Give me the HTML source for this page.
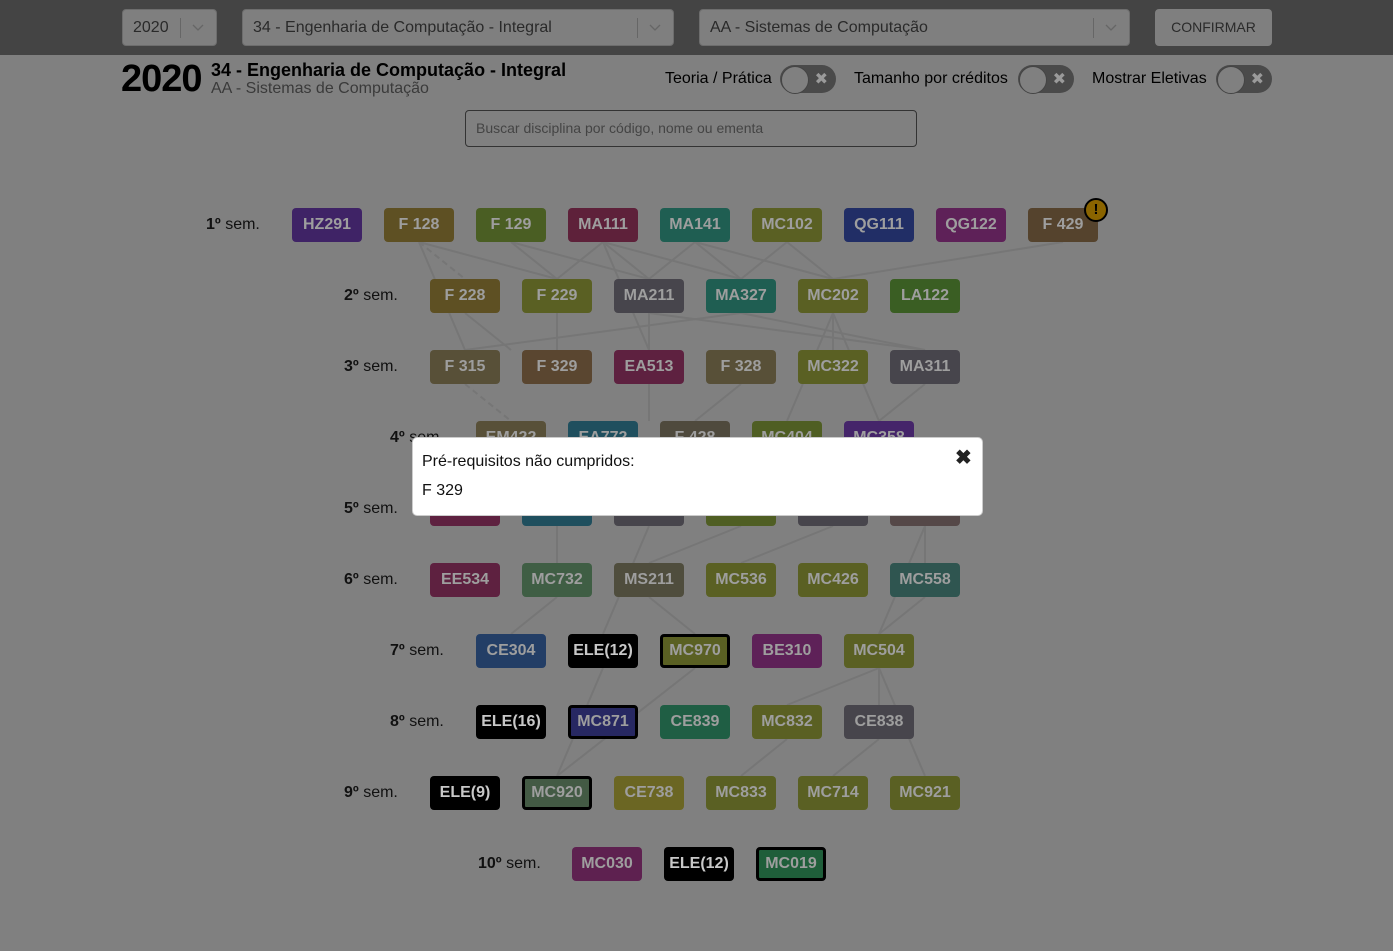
<!DOCTYPE html>
<html><head><meta charset="utf-8"><style>
*{box-sizing:border-box;margin:0;padding:0}
body{width:1393px;height:951px;background:#808080;font-family:"Liberation Sans",sans-serif;position:relative;overflow:hidden;color:#000}
.top{position:absolute;left:0;top:0;width:1393px;height:55px;background:#444}
.sel{position:absolute;top:9px;height:37px;background:#7f7f7f;border:1px solid #6d6d6d;border-radius:4px;font-size:16px;color:#2a2a2a;line-height:35px;padding-left:10px}
.sel .sep{position:absolute;top:8px;width:1px;height:20px;background:#666}
.sel svg{position:absolute;top:14px}
.btn{position:absolute;left:1155px;top:9px;width:117px;height:37px;background:#7f7f7f;border-radius:4px;font-size:14px;color:#2a2a2a;text-align:center;line-height:37px}
.abs{position:absolute;white-space:nowrap}
.tg{position:absolute;top:65px;width:56px;height:28px;border-radius:14px;background:#4a4a4a}
.tg:before{content:"";position:absolute;left:1px;top:1px;width:26px;height:26px;border-radius:50%;background:#808080;border:1px solid #444}
.tg:after{content:"✖";position:absolute;right:8px;top:4px;color:#9a9a9a;font-size:16px}
.b{position:absolute;width:70px;height:34px;border-radius:4px;color:#9e9e9e;font-weight:bold;font-size:16px;text-align:center;line-height:34px}
.k{border:3px solid #000;line-height:28px}
.s{position:absolute;font-size:16px;color:#111}
.s b{font-weight:bold}
</style></head><body>
<div class="top"></div>
<div class="sel" style="left:122px;width:95px">2020<span class="sep" style="left:57px"></span><svg style="left:69px" width="12" height="8"><path d="M1 1l5 5 5-5" stroke="#666" fill="none" stroke-width="1.3"/></svg></div>
<div class="sel" style="left:242px;width:432px">34 - Engenharia de Computação - Integral<span class="sep" style="left:394px"></span><svg style="left:406px" width="12" height="8"><path d="M1 1l5 5 5-5" stroke="#666" fill="none" stroke-width="1.3"/></svg></div>
<div class="sel" style="left:699px;width:431px">AA - Sistemas de Computação<span class="sep" style="left:393px"></span><svg style="left:405px" width="12" height="8"><path d="M1 1l5 5 5-5" stroke="#666" fill="none" stroke-width="1.3"/></svg></div>
<div class="btn">CONFIRMAR</div>

<div class="abs" style="left:121px;top:58px;font-size:38px;font-weight:bold;letter-spacing:-1px">2020</div>
<div class="abs" style="left:211px;top:60px;font-size:18px;font-weight:bold">34 - Engenharia de Computação - Integral</div>
<div class="abs" style="left:211px;top:80px;font-size:16px;color:#3a3a3a">AA - Sistemas de Computação</div>
<div class="abs" style="left:665px;top:70px;font-size:16px">Teoria / Prática</div>
<div class="tg" style="left:780px"></div>
<div class="abs" style="left:854px;top:70px;font-size:16px">Tamanho por créditos</div>
<div class="tg" style="left:1018px"></div>
<div class="abs" style="left:1092px;top:70px;font-size:16px">Mostrar Eletivas</div>
<div class="tg" style="left:1216px"></div>
<div class="abs" style="left:465px;top:110px;width:452px;height:37px;border:1px solid #333;border-radius:4px;font-size:14px;color:#444;line-height:35px;padding-left:10px">Buscar disciplina por código, nome ou ementa</div>

<svg class="abs" style="left:0;top:0" width="1393" height="951">
<g stroke="#767676" stroke-width="2" fill="none">
<line x1="419" y1="242" x2="465" y2="279" stroke-dasharray="6,4"/><line x1="419" y1="242" x2="557" y2="279"/><line x1="419" y1="242" x2="465" y2="350"/>
<line x1="511" y1="242" x2="557" y2="279"/><line x1="511" y1="242" x2="649" y2="279"/>
<line x1="603" y1="242" x2="557" y2="279"/><line x1="603" y1="242" x2="649" y2="279"/><line x1="603" y1="242" x2="741" y2="279"/><line x1="603" y1="242" x2="649" y2="350"/>
<line x1="695" y1="242" x2="649" y2="279"/><line x1="695" y1="242" x2="741" y2="279"/><line x1="695" y1="242" x2="833" y2="279"/>
<line x1="787" y1="242" x2="741" y2="279"/><line x1="787" y1="242" x2="833" y2="279"/>
<line x1="1063" y1="242" x2="833" y2="279"/>
<line x1="465" y1="313" x2="511" y2="350"/><line x1="557" y1="313" x2="557" y2="350"/><line x1="649" y1="313" x2="649" y2="421"/>
<line x1="465" y1="350" x2="741" y2="313"/><line x1="649" y1="313" x2="925" y2="350"/><line x1="741" y1="313" x2="925" y2="350"/>
<line x1="833" y1="313" x2="833" y2="350"/><line x1="833" y1="313" x2="787" y2="421"/><line x1="833" y1="313" x2="879" y2="421"/>
<line x1="465" y1="384" x2="511" y2="421" stroke-dasharray="6,4"/><line x1="649" y1="384" x2="649" y2="421"/><line x1="741" y1="384" x2="695" y2="421"/>
<line x1="925" y1="384" x2="879" y2="421"/>
<line x1="557" y1="526" x2="557" y2="563"/><line x1="649" y1="526" x2="603" y2="634"/><line x1="741" y1="526" x2="649" y2="563"/>
<line x1="833" y1="526" x2="741" y2="563"/><line x1="925" y1="526" x2="879" y2="634"/><line x1="925" y1="526" x2="925" y2="563"/>
<line x1="557" y1="597" x2="511" y2="634"/><line x1="649" y1="597" x2="695" y2="634"/><line x1="925" y1="597" x2="879" y2="634"/>
<line x1="603" y1="668" x2="557" y2="776"/><line x1="695" y1="668" x2="557" y2="776"/>
<line x1="879" y1="668" x2="787" y2="705"/><line x1="879" y1="668" x2="879" y2="705"/><line x1="879" y1="668" x2="925" y2="776"/>
<line x1="787" y1="739" x2="741" y2="776"/><line x1="879" y1="739" x2="833" y2="776"/>
</g></svg>

<div class="s" style="left:206px;top:216px"><b>1º</b> sem.</div>
<div class="s" style="left:344px;top:287px"><b>2º</b> sem.</div>
<div class="s" style="left:344px;top:358px"><b>3º</b> sem.</div>
<div class="s" style="left:390px;top:429px"><b>4º</b> sem.</div>
<div class="s" style="left:344px;top:500px"><b>5º</b> sem.</div>
<div class="s" style="left:344px;top:571px"><b>6º</b> sem.</div>
<div class="s" style="left:390px;top:642px"><b>7º</b> sem.</div>
<div class="s" style="left:390px;top:713px"><b>8º</b> sem.</div>
<div class="s" style="left:344px;top:784px"><b>9º</b> sem.</div>
<div class="s" style="left:478px;top:855px"><b>10º</b> sem.</div>

<div class="b" style="left:292px;top:208px;background:#3f2366">HZ291</div>
<div class="b" style="left:384px;top:208px;background:#5e5023">F 128</div>
<div class="b" style="left:476px;top:208px;background:#4a5e23">F 129</div>
<div class="b" style="left:568px;top:208px;background:#5e213a">MA111</div>
<div class="b" style="left:660px;top:208px;background:#1f5e52">MA141</div>
<div class="b" style="left:752px;top:208px;background:#5a6023">MC102</div>
<div class="b" style="left:844px;top:208px;background:#212e66">QG111</div>
<div class="b" style="left:936px;top:208px;background:#5e2158">QG122</div>
<div class="b" style="left:1028px;top:208px;background:#55432d">F 429</div>
<div class="abs" style="left:1084px;top:198px;width:24px;height:24px;border-radius:50%;background:#8a6400;border:2px solid #000;text-align:center;font-weight:bold;font-size:15px;line-height:20px;color:#000">!</div>

<div class="b" style="left:430px;top:279px;background:#5e5023">F 228</div>
<div class="b" style="left:522px;top:279px;background:#5a6023">F 229</div>
<div class="b" style="left:614px;top:279px;background:#47454c">MA211</div>
<div class="b" style="left:706px;top:279px;background:#1f5e52">MA327</div>
<div class="b" style="left:798px;top:279px;background:#5a6023">MC202</div>
<div class="b" style="left:890px;top:279px;background:#3a5e23">LA122</div>

<div class="b" style="left:430px;top:350px;background:#585038">F 315</div>
<div class="b" style="left:522px;top:350px;background:#5a4630">F 329</div>
<div class="b" style="left:614px;top:350px;background:#5e2140">EA513</div>
<div class="b" style="left:706px;top:350px;background:#585038">F 328</div>
<div class="b" style="left:798px;top:350px;background:#5a6023">MC322</div>
<div class="b" style="left:890px;top:350px;background:#47454c">MA311</div>

<div class="b" style="left:476px;top:421px;background:#585038">EM422</div>
<div class="b" style="left:568px;top:421px;background:#1f4f5e">EA772</div>
<div class="b" style="left:660px;top:421px;background:#4f4a3d">F 428</div>
<div class="b" style="left:752px;top:421px;background:#4f5e23">MC404</div>
<div class="b" style="left:844px;top:421px;background:#45256a">MC358</div>

<div class="b" style="left:430px;top:492px;background:#5e2140"></div>
<div class="b" style="left:522px;top:492px;background:#1f4f5e"></div>
<div class="b" style="left:614px;top:492px;background:#47454c"></div>
<div class="b" style="left:706px;top:492px;background:#4f5e23"></div>
<div class="b" style="left:798px;top:492px;background:#47454c"></div>
<div class="b" style="left:890px;top:492px;background:#554848"></div>

<div class="b" style="left:430px;top:563px;background:#5e2140">EE534</div>
<div class="b" style="left:522px;top:563px;background:#3f5e44">MC732</div>
<div class="b" style="left:614px;top:563px;background:#4f4d3d">MS211</div>
<div class="b" style="left:706px;top:563px;background:#5a6023">MC536</div>
<div class="b" style="left:798px;top:563px;background:#5a6023">MC426</div>
<div class="b" style="left:890px;top:563px;background:#2f5550">MC558</div>

<div class="b" style="left:476px;top:634px;background:#233e66">CE304</div>
<div class="b" style="left:568px;top:634px;background:#000;color:#c8c8c8">ELE(12)</div>
<div class="b k" style="left:660px;top:634px;background:#5a6023">MC970</div>
<div class="b" style="left:752px;top:634px;background:#5e2158">BE310</div>
<div class="b" style="left:844px;top:634px;background:#5a6023">MC504</div>

<div class="b" style="left:476px;top:705px;background:#000;color:#c8c8c8">ELE(16)</div>
<div class="b k" style="left:568px;top:705px;background:#272862">MC871</div>
<div class="b" style="left:660px;top:705px;background:#1f5e44">CE839</div>
<div class="b" style="left:752px;top:705px;background:#5a6023">MC832</div>
<div class="b" style="left:844px;top:705px;background:#47454c">CE838</div>

<div class="b" style="left:430px;top:776px;background:#000;color:#c8c8c8">ELE(9)</div>
<div class="b k" style="left:522px;top:776px;background:#435a44">MC920</div>
<div class="b" style="left:614px;top:776px;background:#6b6623">CE738</div>
<div class="b" style="left:706px;top:776px;background:#5a6023">MC833</div>
<div class="b" style="left:798px;top:776px;background:#5a6023">MC714</div>
<div class="b" style="left:890px;top:776px;background:#5a6023">MC921</div>

<div class="b" style="left:572px;top:847px;background:#5e2150">MC030</div>
<div class="b" style="left:664px;top:847px;background:#000;color:#c8c8c8">ELE(12)</div>
<div class="b k" style="left:756px;top:847px;background:#1f5e3a">MC019</div>

<div class="abs" style="left:412px;top:437px;width:571px;height:79px;background:#fff;border-radius:5px;border:1px solid #ccc">
<div class="abs" style="left:9px;top:15px;font-size:16px;color:#111">Pré-requisitos não cumpridos:</div>
<div class="abs" style="left:9px;top:44px;font-size:16px;color:#111">F 329</div>
<div class="abs" style="left:542px;top:7px;font-size:20px;font-weight:bold;color:#222">✖</div>
</div>
</body></html>
